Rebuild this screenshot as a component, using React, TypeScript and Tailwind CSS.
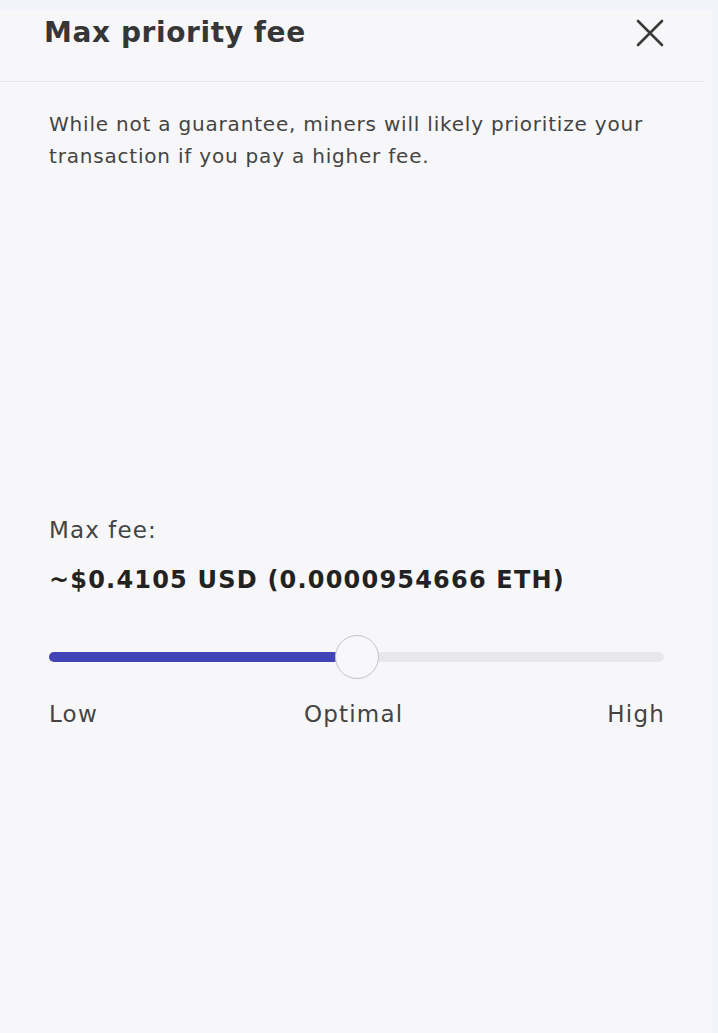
const fontStack = { fontFamily: '"DejaVu Sans", "Noto Sans", sans-serif' };

const App = () => {
  return (
    <div className="min-h-[1033px] w-[718px] bg-[#f0f3f9] pt-[10px]" style={fontStack}>
      <div className="min-h-[1023px] w-[712px] bg-[#f7f7f9]">
        <div className="flex h-[72px] w-[703px] items-center justify-between border-b border-[#e6e6ea] pb-[26px] pl-[44px] pr-[39px]">
          <h1 className="text-[28px] font-bold leading-[34px] tracking-[0.6px] text-[#363636]">Max priority fee</h1>
          <button className="text-[#3a3a3a]" aria-label="Close">
            <svg width="28" height="28" viewBox="0 0 28 28" fill="none" stroke="currentColor" strokeWidth="2.6" strokeLinecap="round">
              <path d="M2 2L26 26M26 2L2 26" />
            </svg>
          </button>
        </div>
        <div className="px-[49px] pt-[26px]">
          <p className="w-[612px] text-[20px] leading-[32px] tracking-[0.8px] text-[#444]">
            While not a guarantee, miners will likely prioritize your transaction if you pay a higher fee.
          </p>
          <div className="mt-[343px] w-[615px]">
            <p className="text-[23px] leading-[30px] tracking-[1.1px] text-[#444]">Max fee:</p>
            <p className="mt-[20px] text-[24px] font-bold leading-[30px] tracking-[1.2px] text-[#222]">
              ~$0.4105 USD (0.0000954666 ETH)
            </p>
            <div className="relative mt-[57px] h-[10px] rounded-full bg-[#e8e8ec]">
              <div className="h-full w-[290px] rounded-full bg-[#4343b8]" />
              <div className="absolute left-[286px] top-[-17px] h-[44px] w-[44px] rounded-full border-[1.5px] border-[#c4c4c8] bg-[#f8f8fa]" />
            </div>
            <div className="mt-[37px] flex justify-between text-[23px] leading-[30px] tracking-[1.2px] text-[#444]">
              <span>Low</span>
              <span className="pl-[2px]">Optimal</span>
              <span className="-mr-[1px]">High</span>
            </div>
          </div>
        </div>
      </div>
    </div>
  );
};

export default App;
